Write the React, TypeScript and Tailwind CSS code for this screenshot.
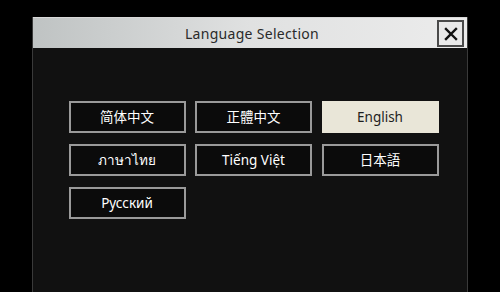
import { useState } from "react";

const languages = [
  "简体中文",
  "正體中文",
  "English",
  "ภาษาไทย",
  "Tiếng Việt",
  "日本語",
  "Русский",
];

export default function App() {
  const [selected, setSelected] = useState("English");

  return (
    <div
      className="w-[500px] h-[292px] bg-black pt-[17px] px-[32px] overflow-hidden"
      style={{ fontFamily: '"Noto Sans", "Noto Sans CJK SC", "Noto Sans CJK JP", sans-serif' }}
    >
      <div className="h-[275px] flex flex-col bg-[#111111] border-x border-[#3a3a3a]">
        {/* Title bar */}
        <div className="relative h-[31px] flex items-center justify-center bg-gradient-to-r from-[#bfc3c3] via-[#e0e1e1] to-[#ececec] border-t border-[#d8d8d8]">
          <span className="text-[14px] text-[#2a2a2a] tracking-[0.3px] ml-[4px]">Language Selection</span>
          <button className="absolute right-[3px] top-[2px] w-[27px] h-[27px] flex items-center justify-center border-2 border-[#4a4a4a] bg-[#e9e9e9]">
            <svg width="14" height="14" viewBox="0 0 14 14">
              <path d="M2 2 L12 12 M12 2 L2 12" stroke="#111" strokeWidth="2.4" strokeLinecap="square" />
            </svg>
          </button>
        </div>

        {/* Language grid */}
        <div className="grid grid-cols-[117px_117px_117px] gap-x-[9.5px] gap-y-[11px] pl-[35.5px] pt-[53px]">
          {languages.map((lang) => {
            const active = lang === selected;
            return (
              <button
                key={lang}
                onClick={() => setSelected(lang)}
                className={
                  active
                    ? "h-[32px] flex items-center justify-center text-[13.5px] bg-[#e9e6d8] text-[#1e1e1e] border-2 border-[#e9e6d8]"
                    : "h-[32px] flex items-center justify-center text-[13.5px] bg-[#0b0b0b] text-white border-2 border-[#9a9a9a]"
                }
              >
                {lang}
              </button>
            );
          })}
        </div>
      </div>
    </div>
  );
}
